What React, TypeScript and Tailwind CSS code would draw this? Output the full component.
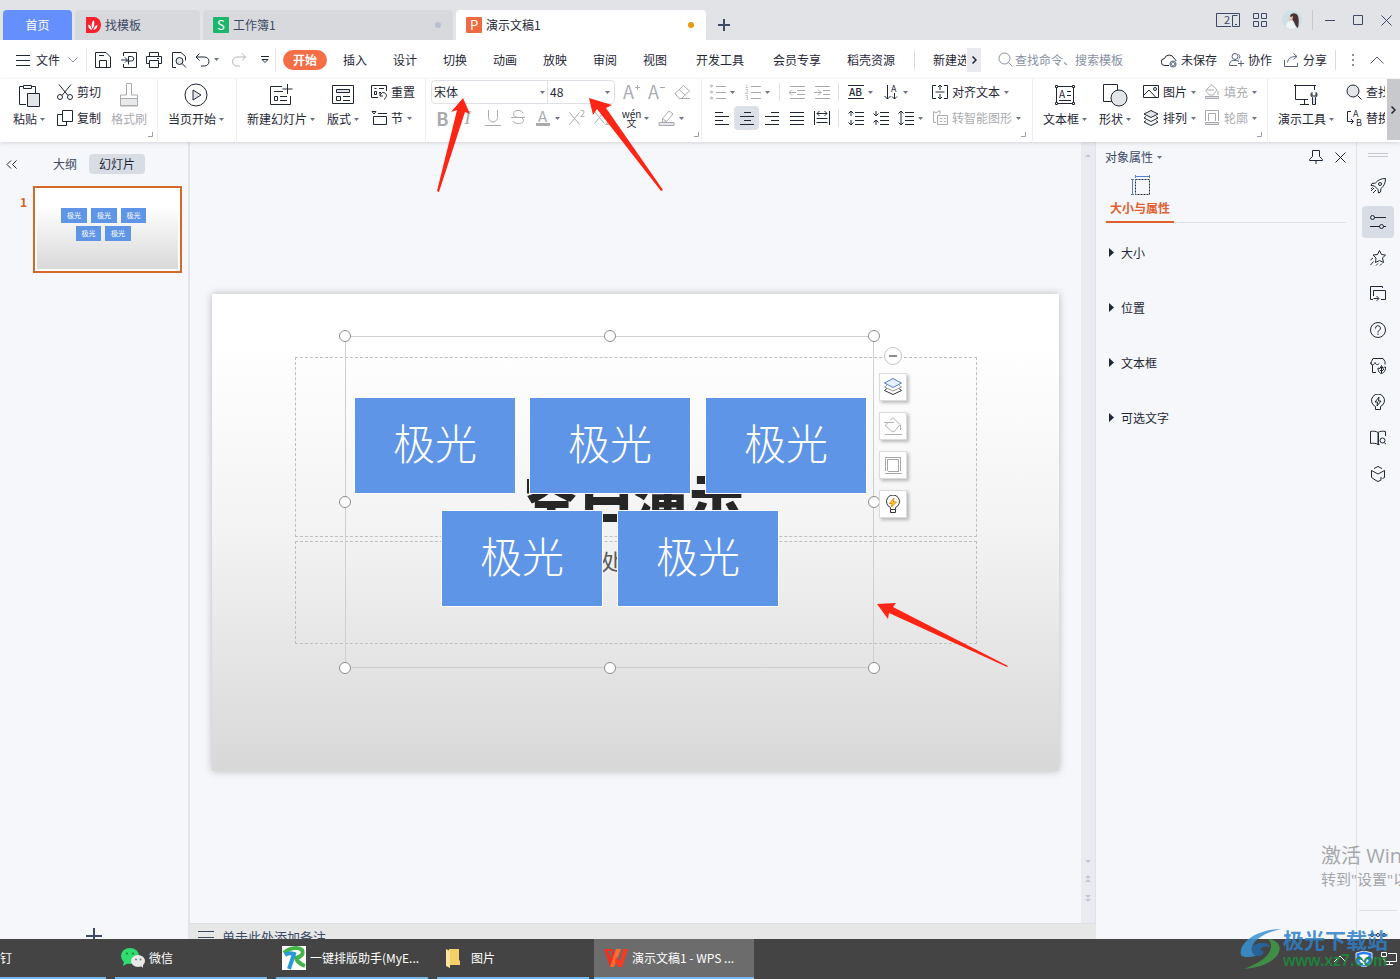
import type { ReactNode } from "react";

type IconProps = {
   w?: number;
   h?: number;
   className?: string;
   children: ReactNode;
};

function Icon({ w = 16, h = 16, className = "", children }: IconProps) {
   return (
      <svg
         width={w}
         height={h}
         viewBox={`0 0 ${w} ${h}`}
         fill="none"
         stroke="currentColor"
         className={`shrink-0 ${className}`}
         aria-hidden="true"
      >
         {children}
      </svg>
   );
}

function Caret() {
   return (
      <Icon w={5} h={3} className="text-[#6b7488]">
         <path d="M0 0h5L2.500 3z" fill="currentColor" stroke="none" />
      </Icon>
   );
}

/* ---------- Title bar ---------- */

function TitleBar() {
   return (
      <header className="flex h-10 shrink-0 items-end bg-[#e2e3e7] pl-[3px] text-[#3c4a66]">
         <div className="flex gap-[3px]">
            <button className="h-[30px] w-[69px] rounded-t-sm bg-[#648ffc] text-white">
               首页
            </button>
            <button className="flex h-[30px] w-[125px] items-center gap-1 rounded-t-sm bg-[#d8d9dc] pl-2.5">
               <Icon>
                  <path
                     d="M1 0h8a7 8 0 0 1 0 16H1z"
                     fill="#f5222d"
                     stroke="none"
                  />
                  <path
                     d="M7 13C3.500 12 3 9.500 3.500 7.500 5 8 6.500 9.500 7 13zM7.500 12C6 8.500 6.500 5.500 8.500 3 10 5.500 9.500 9 7.500 12zM8.500 13c.5-3 2-4.500 4-5 0 2.500-1.500 4.500-4 5z"
                     fill="#fff"
                     stroke="none"
                  />
               </Icon>
               找模板
            </button>
            <button className="flex h-[30px] w-[250px] items-center gap-1 rounded-t-sm bg-[#d8d9dc] pr-3 pl-2.5">
               <Icon>
                  <rect width="16" height="16" rx="1" fill="#1bb56d" stroke="none" />
                  <text x="4" y="13" fontSize="13" fill="#fff" stroke="none">
                     S
                  </text>
               </Icon>
               <span className="flex-1 text-left">工作簿1</span>
               <i className="size-1.5 rounded-full bg-[#b7bfd2]" />
            </button>
            <button className="flex h-[30px] w-[250px] items-center gap-1 rounded-t-sm bg-white pr-3 pl-2.5 text-[#1f2737]">
               <Icon>
                  <rect width="16" height="16" rx="1" fill="#ed6a43" stroke="none" />
                  <text x="4" y="13" fontSize="13" fill="#fff" stroke="none">
                     P
                  </text>
               </Icon>
               <span className="flex-1 text-left">演示文稿1</span>
               <i className="size-1.5 rounded-full bg-[#e69a0c]" />
            </button>
         </div>
         <button aria-label="新建标签" className="ml-3 grid h-[30px] place-items-center">
            <Icon w={12} h={12}>
               <path d="M6 0v12M0 6h12" strokeWidth="2" />
            </Icon>
         </button>

         <div className="mr-2 ml-auto flex h-10 items-center">
            <button aria-label="窗口管理">
               <Icon w={24} h={15}>
                  <path d="M15 13.500H.5V.5h23v13h-7v-11h5M19 11.500h2" />
                  <text x="8" y="11" fontSize="11" fill="currentColor" stroke="none">
                     2
                  </text>
               </Icon>
            </button>
            <button aria-label="应用" className="ml-3">
               <Icon>
                  <path d="M1.500 1.500h5v5h-5zM9.500 1.500h5v5h-5zM1.500 9.500h5v5h-5zM9.500 9.500h5v5h-5z" />
               </Icon>
            </button>
            <button aria-label="账号" className="ml-3.5">
               <Icon w={20} h={20}>
                  <circle cx="10" cy="10" r="10" fill="#cfe0e4" stroke="none" />
                  <path d="M4 17c0-4 2-6 6-6l4 7a10 10 0 0 1-10-1z" fill="#f1f5f5" stroke="none" />
                  <path d="M8 6c1-3 6-4 8 0 1 3 1 8 0 12-2-1-3-4-4-6z" fill="#4b3237" stroke="none" />
                  <path d="M7 8l4-2c0 2-1 4-2 5-2 0-3-2-2-3z" fill="#e5c3b8" stroke="none" />
               </Icon>
            </button>
            <span className="ml-2.5 h-5 w-px bg-[#c7c9cf]" />
            <button aria-label="最小化" className="ml-3">
               <Icon w={10} h={12}>
                  <path d="M0 6.500h10" />
               </Icon>
            </button>
            <button aria-label="最大化" className="ml-[18px]">
               <Icon w={10} h={10}>
                  <path d="M.5.5h9v9h-9z" />
               </Icon>
            </button>
            <button aria-label="关闭" className="ml-[18px]">
               <Icon w={11} h={11}>
                  <path d="M.5.5l10 10M10.500.5l-10 10" />
               </Icon>
            </button>
         </div>
      </header>
   );
}

/* ---------- Menu bar ---------- */

const shortMenus = ["插入", "设计", "切换", "动画", "放映", "审阅", "视图"];

function MenuBar() {
   return (
      <nav className="flex h-[39px] shrink-0 items-center bg-white">
         <button className="ml-4 flex items-center gap-1.5">
            <Icon w={14} h={12}>
               <path d="M0 1.500h14M0 6.500h14M0 11.500h14" />
            </Icon>
            文件
            <Icon w={10} h={6} className="ml-0.5 text-[#8b93a5]">
               <path d="M.5.5L5 5 9.500.5" />
            </Icon>
         </button>
         <span className="ml-2 h-6 w-px bg-[#e3e5ec]" />
         <div className="ml-[3px] flex items-center">
            <button aria-label="保存" className="grid w-[26px] place-items-center">
               <Icon>
                  <path d="M.5.5H11l4.500 4.500v10.500H.5zM4.500 15V8.500h7V15M4 3.500h5" />
               </Icon>
            </button>
            <button aria-label="输出为PDF" className="grid w-[25px] place-items-center">
               <Icon>
                  <path d="M2.500 4V.5h13v15h-13V12M0 8h6M4 5.500L6.500 8 4 10.500M7.500 12.500V4.500h3a2 2 0 0 1 0 4.500H6" />
               </Icon>
            </button>
            <button aria-label="打印" className="grid w-[25px] place-items-center">
               <Icon>
                  <path d="M3.500 4.500v-4h9v4M3.500 11.500H.5v-7h15v7h-3M3.500 8.500h9v7h-9zM11 6.500h2" />
               </Icon>
            </button>
            <button aria-label="打印预览" className="grid w-[25px] place-items-center">
               <Icon>
                  <path d="M5 15.500H1.500V.5H10l4.500 4v4" />
                  <circle cx="8.500" cy="9" r="3.500" fill="#e3e5e8" />
                  <path d="M11 11.500l4 4" />
               </Icon>
            </button>
            <button aria-label="撤销" className="flex w-8 items-center gap-1 pl-1">
               <Icon w={15} h={14}>
                  <path d="M4.500.5L1 4l3.500 3.500M1 4h8.500a4.500 4.500 0 0 1 0 9H6" />
               </Icon>
               <Caret />
            </button>
            <button aria-label="恢复" className="grid w-8 place-items-center text-[#b3b5ba]">
               <Icon w={14} h={14}>
                  <path d="M10 .5L13.500 4 10 7.500M13.500 4H5a4.500 4.500 0 0 0 0 9h3" />
               </Icon>
            </button>
            <button aria-label="更多" className="grid w-5 place-items-center">
               <Icon w={8} h={7}>
                  <path d="M0 .5h8M1 3.500l3 3 3-3z" />
               </Icon>
            </button>
         </div>
         <span className="h-6 w-px bg-[#e3e5ec]" />
         <button className="mr-[3px] ml-[7px] h-5 w-11 rounded-full bg-[#f66e46] font-bold text-white">
            开始
         </button>
         {shortMenus.map((name) => (
            <button key={name} className="w-[50px] text-center">
               {name}
            </button>
         ))}
         <button className="w-20">开发工具</button>
         <button className="w-[74px]">会员专享</button>
         <button className="w-[74px]">稻壳资源</button>
         <span className="ml-1.5 h-5 w-px bg-[#d9dbe2]" />
         <button className="ml-[18px] w-[33px] overflow-hidden whitespace-nowrap">
            新建选项卡
         </button>
         <button
            aria-label="向右滚动"
            className="ml-px grid h-6 w-3.5 place-items-center bg-[#e8eaef]"
         >
            <Icon w={5} h={8}>
               <path d="M.5.5L4 4 .5 7.500" strokeWidth="1.500" />
            </Icon>
         </button>
         <label className="ml-[17px] flex min-w-0 items-center gap-0.5 text-[#8790a5]">
            <Icon w={15} h={15}>
               <circle cx="6.500" cy="6.500" r="5.500" />
               <path d="M10.500 10.500l4 4" />
            </Icon>
            <input
               aria-label="查找"
               placeholder="查找命令、搜索模板"
               className="w-[120px] min-w-0 bg-transparent outline-none placeholder:text-[#8790a5]"
            />
         </label>
         <div className="mr-4 ml-auto flex shrink-0 items-center gap-3">
            <button className="flex items-center gap-1">
               <Icon>
                  <path d="M8 13.500H4a3.500 3.500 0 0 1-.5-7 5 5 0 0 1 9.500 0c1 .5 2 1.500 2 2.500" />
                  <circle cx="12" cy="12" r="3.500" fill="#7b8498" stroke="none" />
                  <path d="M10.500 10.500l3 3M13.500 10.500l-3 3" stroke="#fff" />
               </Icon>
               未保存
            </button>
            <button className="flex items-center gap-1">
               <Icon w={15} className="text-[#56617a]">
                  <circle cx="6" cy="4.500" r="3" />
                  <path d="M8 13.500H.5c0-3.500 1.500-5 4-5h3c1 0 2 .5 2.500 1M12 8.500v6M9 11.500h6M9.500 2.500a2.500 2.500 0 0 1 0 4.500" />
               </Icon>
               协作
            </button>
            <button className="flex items-center gap-1">
               <Icon w={15} className="text-[#56617a]">
                  <path d="M.5 8v6.500h13V11M3.500 10.500c.5-4 3-6 9-6M9.500 1.500l3.500 3-3.500 3" />
               </Icon>
               分享
            </button>
            <span className="-ml-1 h-5 w-px bg-[#d9dbe2]" />
            <button aria-label="更多选项" className="ml-1">
               <Icon w={2} h={12}>
                  <path d="M1 0v2M1 5v2M1 10v2" strokeWidth="2" stroke="#8790a5" />
               </Icon>
            </button>
            <button aria-label="收起功能区" className="ml-1">
               <Icon w={14} h={8} className="text-[#56617a]">
                  <path d="M.5 7.500L7 1l6.500 6.500" />
               </Icon>
            </button>
         </div>
      </nav>
   );
}

/* ---------- Ribbon ---------- */

type BigToolProps = {
   label: string;
   caret?: boolean;
   className?: string;
   children: ReactNode;
};

function BigTool({ label, caret = true, className = "", children }: BigToolProps) {
   return (
      <button className={`flex shrink-0 flex-col items-center ${className}`}>
         <span className="grid h-8 place-items-center">{children}</span>
         <span className="flex h-4 items-center gap-[3px] leading-4 whitespace-nowrap">
            {label}
            {caret && <Caret />}
         </span>
      </button>
   );
}

type SmallToolProps = {
   label: string;
   caret?: boolean;
   muted?: boolean;
   children: ReactNode;
};

function SmallTool({ label, caret = false, muted = false, children }: SmallToolProps) {
   return (
      <button
         className={`flex h-[26px] shrink-0 items-center gap-1 whitespace-nowrap ${muted ? "text-[#a9abaf]" : ""}`}
      >
         {children}
         {label}
         {caret && <Caret />}
      </button>
   );
}

type GlyphToolProps = {
   name: string;
   caret?: boolean;
   muted?: boolean;
   active?: boolean;
   children: ReactNode;
};

function GlyphTool({
   name,
   caret = false,
   muted = false,
   active = false,
   children,
}: GlyphToolProps) {
   return (
      <button
         aria-label={name}
         className={`flex h-6 shrink-0 items-center ${caret ? "w-[35px]" : "w-[25px]"} ${muted ? "text-[#a9abaf]" : ""} ${active ? "rounded-sm bg-[#dce1e7]" : ""}`}
      >
         <span className="grid w-[25px] place-items-center">{children}</span>
         {caret && <Caret />}
      </button>
   );
}

function Divider() {
   return <span className="h-[62px] w-px shrink-0 bg-[#eceef2]" />;
}

function ShortDivider() {
   return <span className="mx-1 h-[18px] w-px shrink-0 bg-[#dfe1e6]" />;
}

function Corner() {
   return (
      <Icon w={5} h={5} className="mt-[53px] ml-auto text-[#9ba1ae]">
         <path d="M0 4.500h4.500V0" />
      </Icon>
   );
}

function Ribbon() {
   return (
      <section className="z-10 flex h-[63px] shrink-0 items-start overflow-hidden bg-white shadow-[0_1px_4px_rgba(0,0,0,0.15)]">
         {/* Clipboard */}
         <div className="flex w-[157px] shrink-0 pr-1">
            <BigTool label="粘贴" className="ml-[13px]">
               <Icon w={22} h={23}>
                  <path d="M8 20.500H1.500V2.500h4M13.500 2.500h4V9M5.500 1.500h8v3h-8z" />
                  <path d="M9.500 9.500h12v13h-12z" fill="#e3e5e8" />
               </Icon>
            </BigTool>
            <div className="ml-3">
               <SmallTool label="剪切">
                  <Icon>
                     <path d="M2 .5l9 11M14 .5l-9 11" />
                     <circle cx="3" cy="13" r="2.500" />
                     <circle cx="13" cy="13" r="2.500" />
                  </Icon>
               </SmallTool>
               <SmallTool label="复制">
                  <Icon>
                     <path d="M5.500.5h10v11h-10zM5.500 4.500h-5v11h9v-4" />
                  </Icon>
               </SmallTool>
            </div>
            <BigTool label="格式刷" caret={false} className="ml-2.5 text-[#a9abaf]">
               <Icon w={20} h={24}>
                  <path d="M7.500 12V.5h5V12h6v11h-17V12z" />
                  <path d="M1.500 15.500h17v7h-17z" fill="#e8e9eb" />
               </Icon>
            </BigTool>
            <Corner />
         </div>
         <Divider />

         {/* Slide show */}
         <div className="flex w-[78px] shrink-0 justify-center pr-0.5">
            <BigTool label="当页开始">
               <Icon w={24} h={24}>
                  <circle cx="12" cy="12" r="11" />
                  <path d="M9 7l8 5-8 5z" fill="#e3e5e8" />
               </Icon>
            </BigTool>
         </div>
         <Divider />

         {/* Slides */}
         <div className="flex w-[188px] shrink-0 gap-3 pl-2.5">
            <BigTool label="新建幻灯片">
               <Icon w={24} h={22}>
                  <path d="M13 2.500H1.500v18h20V12M18.500 0v10M13.500 5h10M5 7.500h9M5.500 12.500h3v4h-3zM11 12.500h7M11 16.500h7" />
               </Icon>
            </BigTool>
            <BigTool label="版式">
               <Icon w={22} h={20}>
                  <path d="M.5.5h21v18H.5zM4.500 11.500h4v4h-4zM11 11.500h7M11 15.500h7" />
                  <path d="M4.500 4.500h13v3h-13z" fill="#e3e5e8" />
               </Icon>
            </BigTool>
            <div>
               <SmallTool label="重置">
                  <Icon>
                     <path d="M15.500 7V1.500H.5v12H7M3.500 4.500h2M8 4.500h5M3.500 7.500h2v3h-2zM8 8.500h2M9 11l2.500-2.500L14 9c2 1.500 2 4-1 6.500M9 8.500V12h3" />
                  </Icon>
               </SmallTool>
               <SmallTool label="节" caret>
                  <Icon>
                     <path d="M1 1.500h4L3 4zM7 3.500h9M2.500 6.500h13v8h-13z" />
                  </Icon>
               </SmallTool>
            </div>
         </div>
         <Divider />

         {/* Font */}
         <div className="flex w-[275px] shrink-0 pr-1.5 pl-1">
            <div>
               <div className="flex h-[26px] items-center">
                  <div className="ml-px flex h-6 w-[184px] rounded-sm border border-[#dfe1e6]">
                     <span className="relative flex w-[116px] items-center border-r border-[#dfe1e6]">
                        <select
                           aria-label="字体"
                           className="w-full appearance-none bg-transparent pl-0.5 outline-none"
                        >
                           <option>宋体</option>
                        </select>
                        <span className="pointer-events-none absolute right-0.5">
                           <Caret />
                        </span>
                     </span>
                     <span className="relative flex flex-1 items-center">
                        <select
                           aria-label="字号"
                           className="w-full appearance-none bg-transparent pl-0.5 outline-none"
                        >
                           <option>48</option>
                        </select>
                        <span className="pointer-events-none absolute right-1">
                           <Caret />
                        </span>
                     </span>
                  </div>
                  <span className="w-1" />
                  <GlyphTool name="增大字号" muted>
                     <Icon w={18}>
                        <text x="0" y="15" fontSize="18" fill="currentColor" stroke="none">
                           A
                        </text>
                        <path d="M12 3.500h5M14.500 1v5" />
                     </Icon>
                  </GlyphTool>
                  <GlyphTool name="减小字号" muted>
                     <Icon w={18}>
                        <text x="0" y="15" fontSize="18" fill="currentColor" stroke="none">
                           A
                        </text>
                        <path d="M12 3.500h5" />
                     </Icon>
                  </GlyphTool>
                  <GlyphTool name="清除格式" muted>
                     <Icon>
                        <path d="M1 9.500L9.500 1.500l6 5.500-8 7.500H5zM5 5.500l6 5.500M7 14.500h9" />
                     </Icon>
                  </GlyphTool>
               </div>
               <div className="flex h-[26px] items-center">
                  <GlyphTool name="加粗" muted>
                     <span className="text-lg leading-6 font-bold">B</span>
                  </GlyphTool>
                  <GlyphTool name="倾斜" muted>
                     <span className="font-['Liberation_Serif'] text-lg leading-6 italic">I</span>
                  </GlyphTool>
                  <GlyphTool name="下划线" muted>
                     <Icon>
                        <path d="M3.500 0v7.500a4.500 4.500 0 0 0 9 0V0M0 15.500h16" />
                     </Icon>
                  </GlyphTool>
                  <GlyphTool name="删除线" muted>
                     <Icon>
                        <path d="M13 3.500C12.500 1.500 11 .5 8 .5S3.500 2 3.500 4 5 7 8 7.500M1 7.500h14M12 8c1 .5 1.500 1.500 1.500 2.500 0 2-2 3-5 3S3.500 12.500 3 11" />
                     </Icon>
                  </GlyphTool>
                  <GlyphTool name="字体颜色" caret muted>
                     <Icon>
                        <text x="3" y="11.500" fontSize="15" fill="currentColor" stroke="none">
                           A
                        </text>
                        <path d="M1 14.500h14" strokeWidth="3" />
                     </Icon>
                  </GlyphTool>
                  <GlyphTool name="上标" muted>
                     <Icon w={17}>
                        <path d="M.5 2.500l10 12M10.500 2.500l-10 12" />
                        <text x="11" y="7" fontSize="9" fill="currentColor" stroke="none">
                           2
                        </text>
                     </Icon>
                  </GlyphTool>
                  <GlyphTool name="下标" muted>
                     <Icon w={17}>
                        <path d="M.5 1.500l10 12M10.500 1.500l-10 12" />
                        <text x="11" y="15" fontSize="9" fill="currentColor" stroke="none">
                           2
                        </text>
                     </Icon>
                  </GlyphTool>
                  <span className="w-1" />
                  <GlyphTool name="拼音指南" caret>
                     <span className="flex flex-col items-center text-[10px] leading-[9px]">
                        <span>wén</span>
                        <span>文</span>
                     </span>
                  </GlyphTool>
                  <GlyphTool name="突出显示" caret muted>
                     <Icon w={17}>
                        <path d="M4.500 8.500L11 1l4 3-6.500 7.500-4 1zM4.500 8.500l4 3" />
                        <path d="M1 12.500h15v3H1z" fill="#e3e5e8" />
                     </Icon>
                  </GlyphTool>
               </div>
            </div>
            <Corner />
         </div>
         <Divider />

         {/* Paragraph */}
         <div className="flex w-[330px] shrink-0 pr-1.5 pl-[3px]">
            <div className="w-[229px]">
               <div className="flex h-[26px] items-center">
                  <GlyphTool name="项目符号" caret muted>
                     <Icon>
                        <circle cx="1.500" cy="2" r="1" />
                        <circle cx="1.500" cy="8" r="1" />
                        <circle cx="1.500" cy="14" r="1" />
                        <path d="M6 2.500h10M6 8.500h10M6 14.500h10" />
                     </Icon>
                  </GlyphTool>
                  <GlyphTool name="编号" caret muted>
                     <Icon>
                        <g fontSize="6" fill="currentColor" stroke="none">
                           <text x="0" y="4">1</text>
                           <text x="0" y="10">2</text>
                           <text x="0" y="16">3</text>
                        </g>
                        <path d="M6 2.500h10M6 8.500h10M6 14.500h10" />
                     </Icon>
                  </GlyphTool>
                  <ShortDivider />
                  <GlyphTool name="减少缩进量" muted>
                     <Icon>
                        <path d="M1 2.500h15M8 6.500h8M8 10.500h8M1 14.500h15M7 8.500H0M3 5.500l-3 3 3 3" />
                     </Icon>
                  </GlyphTool>
                  <GlyphTool name="增加缩进量" muted>
                     <Icon>
                        <path d="M1 2.500h15M9 6.500h7M9 10.500h7M1 14.500h15M0 8.500h7M4 5.500l3 3-3 3" />
                     </Icon>
                  </GlyphTool>
                  <ShortDivider />
                  <GlyphTool name="字符间距" caret>
                     <Icon>
                        <path d="M0 1.500h16M0 14.500h16" />
                        <text x="1" y="12" fontSize="10" fontWeight="500" fill="currentColor" stroke="none">
                           AB
                        </text>
                     </Icon>
                  </GlyphTool>
                  <GlyphTool name="文字方向" caret>
                     <Icon>
                        <path d="M4.500 1v14M1.500 12l3 3 3-3M11.500 9v6M9 12.500l2.500 2.500 2.500-2.500" />
                        <text x="8" y="8" fontSize="9" fill="currentColor" stroke="none">
                           A
                        </text>
                     </Icon>
                  </GlyphTool>
               </div>
               <div className="flex h-[26px] items-center pl-1">
                  <GlyphTool name="左对齐">
                     <Icon>
                        <path d="M1 2.500h8M1 6.500h14M1 10.500h8M1 14.500h14" />
                     </Icon>
                  </GlyphTool>
                  <GlyphTool name="居中对齐" active>
                     <Icon>
                        <path d="M5 2.500h7M1 6.500h14M5 10.500h7M1 14.500h14" />
                     </Icon>
                  </GlyphTool>
                  <GlyphTool name="右对齐">
                     <Icon>
                        <path d="M7 2.500h8M1 6.500h14M7 10.500h8M1 14.500h14" />
                     </Icon>
                  </GlyphTool>
                  <GlyphTool name="两端对齐">
                     <Icon>
                        <path d="M1 2.500h14M1 6.500h14M1 10.500h14M1 14.500h14" />
                     </Icon>
                  </GlyphTool>
                  <GlyphTool name="分散对齐">
                     <Icon>
                        <path d="M.5 1v14M15.500 1v14M3 3.500h10M5.500 1L3 3.500 5.500 6M10.500 1L13 3.500 10.500 6M2.500 8.500h11M2.500 12.500h11" />
                     </Icon>
                  </GlyphTool>
                  <ShortDivider />
                  <GlyphTool name="增大段距">
                     <Icon>
                        <path d="M7 2.500h9M7 6.500h9M7 10.500h9M7 14.500h9M3 1v5M.5 3.500L3 1l2.500 2.500M3 10v5M.5 12.500L3 15l2.500-2.500" />
                     </Icon>
                  </GlyphTool>
                  <GlyphTool name="减小段距">
                     <Icon>
                        <path d="M7 2.500h9M7 6.500h9M7 10.500h9M7 14.500h9M3 1v5M.5 3.500L3 6l2.500-2.500M3 10v5M.5 12.500L3 10l2.500 2.500" />
                     </Icon>
                  </GlyphTool>
                  <GlyphTool name="行距" caret>
                     <Icon>
                        <path d="M7 2.500h9M7 6.500h9M7 10.500h9M7 14.500h9M3 1v14M.5 3.500L3 1l2.500 2.500M.5 12.500L3 15l2.500-2.500" />
                     </Icon>
                  </GlyphTool>
               </div>
            </div>
            <div>
               <SmallTool label="对齐文本" caret>
                  <Icon>
                     <path d="M4 1.500H.5v13H4M12 1.500h3.500v13H12M3.500 8h9M8 6V1M6 3l2-2 2 2M8 10v5M6 13l2 2 2-2" />
                  </Icon>
               </SmallTool>
               <SmallTool label="转智能图形" caret muted>
                  <Icon>
                     <path d="M4 12.500H1.500V1.500L4 3l4-2.500v4M5.500 5.500h10v9h-10zM8 8.500h2M12 8.500h2M8 11.500h2M12 11.500h2" />
                  </Icon>
               </SmallTool>
            </div>
            <Corner />
         </div>
         <Divider />

         {/* Drawing */}
         <div className="flex w-[234px] shrink-0 pr-1.5 pl-2.5">
            <BigTool label="文本框">
               <Icon w={22} h={22}>
                  <path d="M2.500 2.500h17v17h-17z" />
                  <path d="M1.500 1.500h2v2h-2zM18.500 1.500h2v2h-2zM1.500 18.500h2v2h-2zM18.500 18.500h2v2h-2z" fill="#fff" />
                  <text x="5" y="14" fontSize="10" fill="currentColor" stroke="none">
                     A
                  </text>
                  <path d="M13 7.500h4M13 11.500h4M5 16.500h12" />
               </Icon>
            </BigTool>
            <BigTool label="形状" className="ml-3">
               <Icon w={25} h={23}>
                  <path d="M.5.5h14v17H.5z" />
                  <circle cx="16" cy="14" r="8" fill="#e3e5e8" />
               </Icon>
            </BigTool>
            <div className="ml-3">
               <SmallTool label="图片" caret>
                  <Icon>
                     <path d="M.5 1.500h15v12H.5zM1 11l5-5 7 7.500" />
                     <circle cx="12" cy="5" r="1.500" />
                  </Icon>
               </SmallTool>
               <SmallTool label="排列" caret>
                  <Icon>
                     <path d="M8 .5l7 3.500-7 3.500L1 4z" fill="#e3e5e8" />
                     <path d="M3 6.500L1 8l7 3.500L15 8l-2-1.500M3 10.500L1 12l7 3.500 7-3.500-2-1.500" />
                  </Icon>
               </SmallTool>
            </div>
            <div className="ml-2">
               <SmallTool label="填充" caret muted>
                  <Icon>
                     <path d="M2.500 5.500L8 .5l5 5.500-4 5H5.500L2 7.500zM2 6h8M14 7v4" />
                     <path d="M1.500 12.500h13v2h-13z" fill="#e3e5e8" />
                  </Icon>
               </SmallTool>
               <SmallTool label="轮廓" caret muted>
                  <Icon>
                     <path d="M1.500 11V.5h13V11M4.500 11V3.500h7V11" />
                     <path d="M1.500 12.500h13v2h-13z" fill="#e3e5e8" />
                  </Icon>
               </SmallTool>
            </div>
            <Corner />
         </div>
         <Divider />

         {/* Tools */}
         <div className="mr-0.5 flex min-w-0 flex-1 overflow-hidden pl-2.5">
            <BigTool label="演示工具">
               <Icon w={24} h={22}>
                  <path d="M14 15.500H1.500V.5M0 1.500h22M20.500 2v4M10.500 16v5M6 20.500h9" />
                  <path d="M18 8.500c-1.500 1-1.500 4 .5 5v7h3v-7c2-1 2-4 .5-5V12h-4z" fill="#e3e5e8" />
               </Icon>
            </BigTool>
            <div className="ml-3 min-w-0 overflow-hidden">
               <SmallTool label="查找">
                  <Icon>
                     <circle cx="7" cy="7" r="6" fill="#e3e5e8" />
                     <path d="M11.500 11.500l4 4" />
                  </Icon>
               </SmallTool>
               <SmallTool label="替换">
                  <Icon>
                     <path d="M5 1.500H1.500v10H7M5 9l2.500 2.500L5 14" />
                     <text x="7" y="7" fontSize="9" fill="currentColor" stroke="none">
                        A
                     </text>
                     <text x="10" y="16" fontSize="9" fill="currentColor" stroke="none">
                        B
                     </text>
                  </Icon>
               </SmallTool>
            </div>
         </div>
         <button
            aria-label="功能区向右滚动"
            className="grid h-[61px] w-[13px] shrink-0 place-items-center bg-[#c8c9cd]"
         >
            <Icon w={5} h={8}>
               <path d="M.5.5L4 4 .5 7.500" strokeWidth="1.500" />
            </Icon>
         </button>
      </section>
   );
}

/* ---------- Slide list ---------- */

function SlidePanel() {
   return (
      <aside className="flex w-[190px] shrink-0 flex-col overflow-hidden border-r-2 border-[#e2e4ec]">
         <div className="mt-3 flex h-5 items-center pl-1.5">
            <button aria-label="收起" className="w-[47px]">
               <Icon w={12} h={9}>
                  <path d="M5 .5l-4 4 4 4M10.500.5l-4 4 4 4" />
               </Icon>
            </button>
            <button className="text-[#3c4a66]">大纲</button>
            <button className="ml-3 h-5 w-14 rounded-sm bg-[#d8dde5]">幻灯片</button>
         </div>
         <div className="mt-3 flex pr-1.5">
            <span className="w-[33px] pt-2 pr-1.5 text-right font-bold text-[#d56427]">
               1
            </span>
            <button
               aria-label="幻灯片 1"
               className="h-[87px] flex-1 border-2 border-[#d4692c] bg-white p-0.5"
            >
               <span className="flex h-full flex-col items-center gap-[3px] bg-linear-to-b from-white from-20% to-[#d9d9d9] pt-[18px] pr-2 text-[7px] leading-[15px] text-white">
                  <span className="flex gap-1">
                     <span className="w-[26px] bg-[#5f95e6]">极光</span>
                     <span className="w-[26px] bg-[#5f95e6]">极光</span>
                     <span className="w-[25px] bg-[#5f95e6]">极光</span>
                  </span>
                  <span className="flex gap-1">
                     <span className="w-[25px] bg-[#5f95e6]">极光</span>
                     <span className="w-[26px] bg-[#5f95e6]">极光</span>
                  </span>
               </span>
            </button>
         </div>
         <button
            aria-label="新建幻灯片"
            className="mt-auto flex h-[11px] justify-center overflow-hidden text-[#3c4a66]"
         >
            <Icon>
               <path d="M8 0v16M0 8h16" strokeWidth="2" />
            </Icon>
         </button>
      </aside>
   );
}

/* ---------- Slide canvas ---------- */

const shapes = [
   "left-[142px] top-[103px]",
   "left-[317px] top-[103px]",
   "left-[493px] top-[103px]",
   "left-[229px] top-[216px]",
   "left-[405px] top-[216px]",
];

const handles = [
   "left-0 top-0",
   "left-1/2 top-0",
   "left-full top-0",
   "left-0 top-1/2",
   "left-full top-1/2",
   "left-0 top-full",
   "left-1/2 top-full",
   "left-full top-full",
];

const floatButton =
   "grid size-7 place-items-center border border-[#dcdcde] bg-white shadow-[2px_2px_3px_rgba(0,0,0,0.25)]";

function Slide() {
   return (
      <div className="relative h-[477px] w-[847px] shrink-0 bg-linear-to-b from-white from-10% via-[#f3f3f3] via-50% to-[#d8d8d8] shadow-[0_0_8px_rgba(0,0,0,0.25)]">
         <div className="absolute top-[63px] left-[83px] flex h-[180px] w-[682px] items-end justify-center border border-dashed border-[#bfbfbf] pr-1 pb-2.5 text-[55px] leading-[60px] font-black text-[#262626]">
            空白演示
         </div>
         <div className="absolute top-[247px] left-[83px] h-[103px] w-[682px] border border-dashed border-[#bfbfbf] pr-1 text-center text-[22px] leading-9 text-[#595959]">
            单击此处输入副标题
         </div>
         {shapes.map((place) => (
            <div
               key={place}
               className={`absolute flex h-[97px] w-[162px] items-center justify-center border border-white bg-[#5f95e6] pb-2 text-[42px] leading-none font-light text-white ${place}`}
            >
               极光
            </div>
         ))}

         {/* Selection frame */}
         <div className="absolute top-[42px] left-[133px] h-[332px] w-[529px]">
            <div className="h-full border border-[#cfcfd2]" />
            {handles.map((place) => (
               <i
                  key={place}
                  className={`absolute size-3 -translate-1/2 rounded-full border border-[#8c8c8c] bg-white ${place}`}
               />
            ))}
         </div>

         {/* Floating toolbar */}
         <div className="absolute top-[53px] left-[667px] flex flex-col items-center gap-[11px]">
            <button
               aria-label="收起工具"
               className="-mb-[3px] grid size-[18px] place-items-center rounded-full border border-[#c4c4c4] bg-white"
            >
               <i className="h-0.5 w-2 bg-[#8c8c8c]" />
            </button>
            <button aria-label="叠放次序" className={floatButton}>
               <Icon w={18} h={18}>
                  <path d="M3 10.500L.5 12.500l8.500 4 8.500-4-2.500-2" stroke="#333" />
                  <path d="M3 7L.5 9 9 13l8.500-4L15 7" stroke="#999" />
                  <path d="M9 .5L17.500 5 9 9.500.5 5z" fill="#e6effc" stroke="#4d82d6" />
               </Icon>
            </button>
            <button aria-label="形状填充" className={floatButton}>
               <Icon w={18} h={18} className="text-[#b0b0b2]">
                  <path d="M6 3.500L9 .5l7 7-4 5c-1 3-5 3-6 0L1.500 9V8L4 5.500M0 5.500h10M16.500 8v5M1 17.500h17" />
               </Icon>
            </button>
            <button aria-label="形状轮廓" className={floatButton}>
               <Icon w={18} h={18} className="text-[#a8a8aa]">
                  <path d="M1.500 15V1.500h15V15M3.500 15V3.500h11V15M1 17.500h17M4 15.500h11" />
               </Icon>
            </button>
            <button aria-label="智能推荐" className={floatButton}>
               <Icon w={16} h={18}>
                  <path d="M5.500 14v-1.500a6.500 6.500 0 1 1 5 0V14M5.500 14.500h5v3h-5z" stroke="#333" />
                  <path d="M9 3L4.500 8.500H7L6.500 12 11.500 7H8.500z" fill="#ffd21f" stroke="#e58a1f" />
               </Icon>
            </button>
         </div>
      </div>
   );
}

function ScrollBar() {
   return (
      <div className="flex w-[15px] shrink-0 flex-col items-center border-r border-[#dfe2ea] bg-[#e9ebf1] py-3 text-[#c3c7d0]">
         <Icon w={6} h={3}>
            <path d="M0 3h6L3 0z" fill="currentColor" stroke="none" />
         </Icon>
         <Icon w={6} h={3} className="mt-auto">
            <path d="M0 0h6L3 3z" fill="currentColor" stroke="none" />
         </Icon>
         <Icon w={6} h={8} className="mt-3">
            <path d="M0 3h6L3 0zM0 7h6L3 4z" fill="currentColor" stroke="none" />
         </Icon>
         <Icon w={6} h={8} className="mt-3 mb-2">
            <path d="M0 0h6L3 3zM0 4h6L3 7z" fill="currentColor" stroke="none" />
         </Icon>
      </div>
   );
}

function Editor() {
   return (
      <main className="flex min-w-0 flex-1 flex-col">
         <div className="flex min-h-0 flex-1">
            <div className="flex min-w-0 flex-1 items-center justify-center overflow-hidden">
               <Slide />
            </div>
            <ScrollBar />
         </div>
         <div className="flex h-4 shrink-0 items-start gap-2 overflow-hidden border-t border-[#dcdfe5] bg-[#e7e7e7] pt-1 pl-2 text-[13px] leading-[18px] text-[#3c4a66]">
            <Icon h={15} className="mt-[3px]">
               <path d="M0 .5h16M0 6.500h16M0 12.500h16" />
            </Icon>
            单击此处添加备注
         </div>
      </main>
   );
}

/* ---------- Properties ---------- */

const sections = ["大小", "位置", "文本框", "可选文字"];

function Properties() {
   return (
      <aside className="w-[260px] shrink-0 pr-2.5 pl-[9px]">
         <div className="mt-[5px] flex h-5 items-center">
            <button className="flex items-center gap-1 text-[#3c4a66]">
               对象属性
               <Caret />
            </button>
            <button aria-label="固定" className="ml-auto">
               <Icon w={14} h={14}>
                  <path d="M3.500.5h7v6l3 3v1H.5v-1l3-3zM7 10.500V14" />
               </Icon>
            </button>
            <button aria-label="关闭面板" className="ml-3">
               <Icon w={11} h={11}>
                  <path d="M.5.5l10 10M10.500.5l-10 10" />
               </Icon>
            </button>
         </div>
         <div className="flex border-b border-[#e0e2e6]">
            <button className="-mb-px ml-px flex w-[68px] flex-col items-center gap-1 border-b-2 border-[#e1602f] pt-[7px] pb-[5px] font-bold text-[#e1602f]">
               <Icon w={20} h={22}>
                  <path d="M5 2.500h15M5.500 1v3M19.500 1v3M2.500 5v15M1 5.500h3M1 20.500h3" stroke="#4d82d6" />
                  <path d="M5.500 5.500h14v15h-14z" strokeDasharray="2 1" stroke="#1f2737" />
               </Icon>
               大小与属性
            </button>
         </div>
         {sections.map((name) => (
            <button key={name} className="flex h-[55px] w-full items-center gap-[7px] pt-1 pl-1">
               <Icon w={5} h={9}>
                  <path d="M0 0l5 4.500L0 9z" fill="currentColor" stroke="none" />
               </Icon>
               {name}
            </button>
         ))}
      </aside>
   );
}

/* ---------- Side tools ---------- */

const sideTools: { name: string; active?: boolean; art: ReactNode }[] = [
   {
      name: "快捷",
      art: (
         <>
            <path d="M15.500.5C11 .5 8 2 5.500 5L2 5.500l-1 2 3.500.5 3.500 3.500.5 3.500 2-1 .5-3.500c3-2.500 4.500-5.500 4.500-10z" />
            <circle cx="10" cy="6" r="1.500" />
            <path d="M4 10l-3 3M6 12l-3 3M2.500 9.500l-1.500 1.500" />
         </>
      ),
   },
   {
      name: "属性",
      active: true,
      art: (
         <>
            <circle cx="2.500" cy="3.500" r="2" />
            <path d="M4.500 3.500H16M0 12.500h9.500M13.500 12.500H16" />
            <circle cx="11.500" cy="12.500" r="2" />
         </>
      ),
   },
   {
      name: "动画",
      art: <path d="M9.500.5l2 4 4 .5-3 3 1 4.500-4-2-4 2L6 8 3 5l4.500-.5zM3 8l-2.500 2M3.500 11.500L.5 15M8 13.500L6 15.500M12 13.500l-2 2" />,
   },
   {
      name: "切换",
      art: <path d="M12.500 2V.5H.5v13H3M11 13.500h4.500v-9h-12v5.500M3.500 12.500h5M6.500 10l2.500 2.500L6.500 15" />,
   },
   {
      name: "帮助",
      art: (
         <>
            <circle cx="8" cy="8" r="7.500" />
            <path d="M5.500 6.500a2.500 2.500 0 1 1 3.500 2c-1 .5-1 1-1 2M8 11.500V13" />
         </>
      ),
   },
   {
      name: "稻壳",
      art: <path d="M2.500 7v7.500H6M1.500 6.500a3 3 0 0 1 0-3l1.500-3h10l2 3v3M.5 4.500c0 3 4 3 4.500 0 .5 2 3 3 4 1M8 10c0 5 3 5.500 3.500 5.500S16 14 15.500 9c-1 0-2 .5-2.500 1.500l-1.500-3-1.500 3zM11.500 9v6.500M10 12l1.500 1.500L14 11" />,
   },
   {
      name: "灵感",
      art: <path d="M5.500 12.500a6.500 6.500 0 1 1 5 0v3h-5zM9 3L5 8h2.500L7 12l4-5H8.500z" />,
   },
   {
      name: "查阅",
      art: (
         <>
            <path d="M8 2.500C6 1 3 1 .5 1.500v12c2.500-.5 5.500-.5 7.500 1v-12c2-1.500 5-1.500 7.500-1V6M8 14.500h1.500M8.500 3v11" />
            <circle cx="12.500" cy="10.500" r="2.500" />
            <path d="M14.500 12.500l1.500 2" />
         </>
      ),
   },
   {
      name: "模型",
      art: <path d="M4 2.500l4-2 4 2M6 14.500l-4.500-3v-7L8 8l6.500-3.500v7l-2 1M6 14.500l2 1 3-1.500V11" />,
   },
];

function SideTools() {
   return (
      <aside className="flex w-11 shrink-0 flex-col items-center overflow-hidden border-l border-[#dfe2e8] pt-[11px] pr-0.5">
         <Icon w={20} h={4} className="text-[#c3c7d0]">
            <path d="M0 .5h20M0 3.500h20" />
         </Icon>
         <div className="mt-[13px] flex flex-col gap-1">
            {sideTools.map((tool) => (
               <button
                  key={tool.name}
                  aria-label={tool.name}
                  className={`grid size-8 place-items-center rounded-sm ${tool.active ? "bg-[#d8dde5]" : ""}`}
               >
                  <Icon>{tool.art}</Icon>
               </button>
            ))}
         </div>
         <span className="mt-auto h-px w-[38px] bg-[#dcdfe5]" />
         <button aria-label="更多面板" className="mt-[22px] mb-0.5">
            <Icon w={16} h={4}>
               <circle cx="2" cy="2" r="1.500" />
               <circle cx="8" cy="2" r="1.500" />
               <circle cx="14" cy="2" r="1.500" />
            </Icon>
         </button>
      </aside>
   );
}

/* ---------- Task bar ---------- */

function TaskBar() {
   return (
      <footer className="flex h-10 shrink-0 items-stretch overflow-hidden bg-[#434443] text-white">
         <button className="w-[106px] border-b-2 border-[#76b9ed] text-left">钉</button>
         <button className="ml-[9px] flex w-[152px] items-center gap-1 border-b-2 border-[#76b9ed] pl-1.5">
            <Icon w={24} h={20}>
               <ellipse cx="9" cy="8" rx="9" ry="8" fill="#2fdc6e" stroke="none" />
               <path d="M3 13l-1 5 5-3z" fill="#2fdc6e" stroke="none" />
               <circle cx="6" cy="5.500" r="1" fill="#1a7a40" stroke="none" />
               <circle cx="12" cy="5.500" r="1" fill="#1a7a40" stroke="none" />
               <ellipse cx="17" cy="13" rx="7" ry="6" fill="#e8e8e8" stroke="none" />
               <path d="M19 17l3 3v-5z" fill="#e8e8e8" stroke="none" />
               <circle cx="15" cy="11.500" r="1" fill="#777" stroke="none" />
               <circle cx="19.500" cy="11.500" r="1" fill="#777" stroke="none" />
            </Icon>
            微信
         </button>
         <button className="ml-[9px] flex w-[152px] items-center gap-1 border-b-2 border-[#76b9ed] pl-1.5 whitespace-nowrap">
            <Icon w={24} h={24}>
               <rect width="24" height="24" fill="#fff" stroke="none" />
               <path d="M2 7C8 1 17 1 20 4c2 4-1 7-6 8 1 3 4 6 9 8" stroke="#43b649" strokeWidth="4" />
               <path d="M3 9c3-2 6-2 9-1L7 23" stroke="#2a9ad6" strokeWidth="4" />
            </Icon>
            一键排版助手(MyE...
         </button>
         <button className="ml-[9px] flex w-[152px] items-center gap-[11px] border-b-2 border-[#76b9ed] pl-[9px]">
            <Icon w={14} h={20}>
               <path d="M3 1h10v11l1 1v4H3z" fill="#f7cf68" stroke="none" />
               <path d="M0 1l4 2v17l-4-2z" fill="#fbe3a0" stroke="none" />
            </Icon>
            图片
         </button>
         <button className="ml-[5px] flex w-40 items-center gap-1 border-b-2 border-[#76b9ed] bg-[#6b6c6b] pl-2.5 whitespace-nowrap">
            <Icon w={24} h={18}>
               <path d="M0 0h9l4 9-4 9H6z" fill="#f0301c" stroke="none" />
               <path d="M4 2h4l-1 8z" fill="#6b6c6b" stroke="none" />
               <path d="M12 0h5l-7 18H6z" fill="#ff6a35" stroke="none" />
               <path d="M12 8l4 4 3-12h5l-6 18h-4l-3-6z" fill="#fb3a22" stroke="none" />
            </Icon>
            演示文稿1 - WPS ...
         </button>
         <div className="mr-[3px] ml-auto flex items-center gap-2">
            <Icon w={14} h={8}>
               <path d="M1 7l6-6 6 6" />
            </Icon>
            <Icon w={18}>
               <path d="M9 0l8 2v6c0 4-4 7-8 8-4-1-8-4-8-8V2z" fill="#2b7bf0" stroke="#dbe9ff" />
               <path d="M4 4c3-1 7-1 10 0L9 10z" fill="#fff" stroke="none" />
               <path d="M5 9l4 4 4-4" stroke="#fff" strokeWidth="2" />
            </Icon>
            <Icon>
               <path d="M7 2.500h8.500v8H3.500V8M8.500 11v3M5 13.500h7M.5 1.500h5v4h-5zM3 6v3" />
            </Icon>
         </div>
      </footer>
   );
}

/* ---------- Overlays ---------- */

function Arrows() {
   return (
      <svg
         width="1400"
         height="979"
         className="pointer-events-none absolute top-0 left-0 z-20"
         fill="#fd2616"
         aria-hidden="true"
      >
         <path d="M463 98L451 112l6-2-20 81 2 1 26-80 5 2z" />
         <path d="M589 98l4 17 4-6 64 82 2-1-57-82 6-3z" />
         <path d="M877 604l11 15 1-6 118 54 1-1-115-59 3-4z" />
      </svg>
   );
}

function Watermarks() {
   return (
      <>
         <div className="pointer-events-none absolute right-0 bottom-[89px] z-20 w-[79px] overflow-hidden font-['Open_Sans','Noto_Sans_CJK_SC',sans-serif] whitespace-nowrap text-[#a5a7aa]">
            <p className="text-xl leading-6">激活 Windows</p>
            <p className="text-[15px] leading-[22px]">转到"设置"以激活 Windows。</p>
         </div>
         <div className="pointer-events-none absolute right-3 bottom-2 z-20 flex items-center gap-px">
            <Icon w={44} h={42}>
               <path d="M3 27C0 14 20 1 43 1 30 4 17 10 14 19c-1 5 2 8 5 9-7 1-14 2-16-1z" fill="#3793d1" stroke="none" opacity=".85" />
               <path d="M30 11c15 2 15 14 3 22-8 5-16 7-27 8 13-5 26-12 27-22 0-4-1-6-3-8z" fill="#3f9b45" stroke="none" opacity=".85" />
               <path d="M14 19c6-6 16-5 18 0-4-1-8-1-10 3 3 0 4 2 3 4-5 5-13 0-11-7z" fill="#2467a5" stroke="none" opacity=".85" />
            </Icon>
            <div className="font-bold">
               <p className="text-[21px] leading-6 text-[#2f7fc9]/85">极光下载站</p>
               <p className="font-['Liberation_Sans'] text-base leading-5 text-[#1c8a3c]/85">
                  www.xz7.com
               </p>
            </div>
         </div>
      </>
   );
}

export default function App() {
   return (
      <div className="relative flex h-screen flex-col overflow-hidden bg-[#f5f7fa] font-['Noto_Sans_CJK_SC',sans-serif] text-xs text-[#1f2737]">
         <TitleBar />
         <MenuBar />
         <Ribbon />
         <div className="flex min-h-0 flex-1">
            <SlidePanel />
            <Editor />
            <Properties />
            <SideTools />
         </div>
         <TaskBar />
         <Arrows />
         <Watermarks />
      </div>
   );
}
